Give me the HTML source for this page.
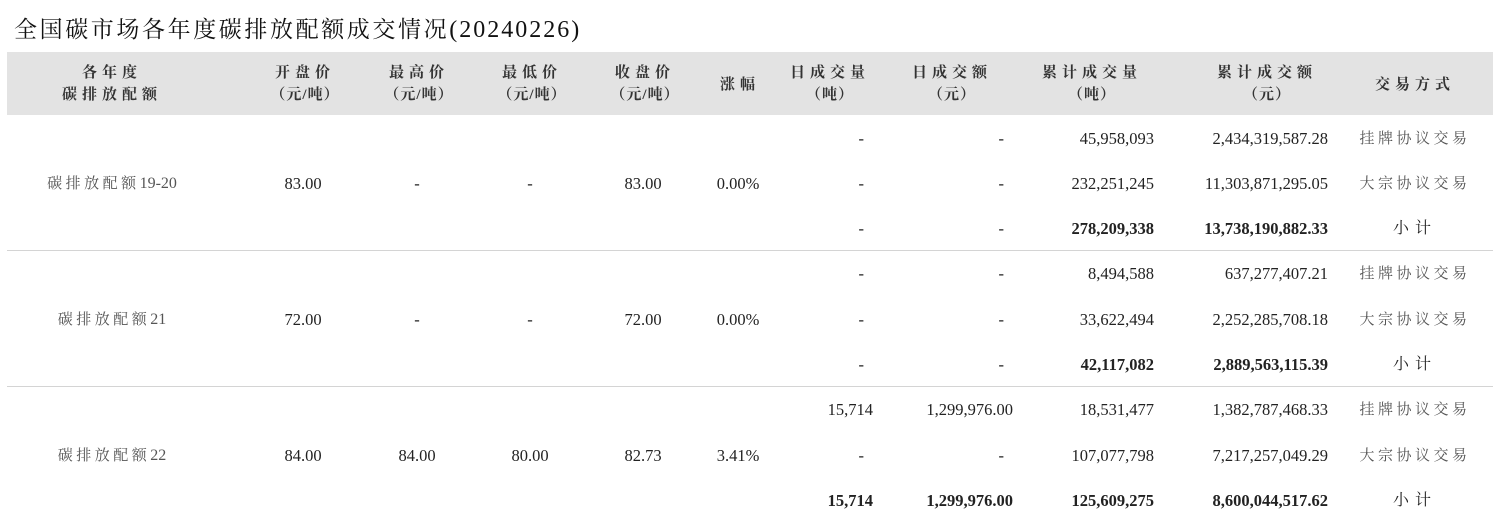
<!DOCTYPE html><html><head><meta charset="utf-8"><style>
body{margin:0;width:1500px;height:526px;background:#fff;position:relative;overflow:hidden;font-family:"Liberation Serif","Noto Serif CJK SC",serif;color:#222}
div{position:absolute;white-space:nowrap;font-size:16.5px;line-height:20px}
.t{left:14px;top:15px;font-size:23px;line-height:30px;color:#111;letter-spacing:2.6px}
.hd{left:7px;top:52px;width:1486px;height:63px;background:#e3e3e3}
.h{font-weight:bold;color:#333;text-align:center;width:200px;letter-spacing:5px;font-size:15px;line-height:22px}
.h span{letter-spacing:1px}
.c{text-align:center;width:200px}
.r{text-align:right}
.z{color:#555;letter-spacing:3.5px;font-size:15px}
.b{font-weight:bold}
.ln{left:7px;width:1486px;height:1px;background:#d4d4d4}
</style></head><body>
<div class="t">全国碳市场各年度碳排放配额成交情况<span style="letter-spacing:2px;font-size:24px">(20240226)</span></div>
<div class="hd"></div>
<div class="h" style="left:12px;top:62px">各年度<br>碳排放配额</div>
<div class="h" style="left:205px;top:62px">开盘价<br><span>（元/吨）</span></div>
<div class="h" style="left:319px;top:62px">最高价<br><span>（元/吨）</span></div>
<div class="h" style="left:432px;top:62px">最低价<br><span>（元/吨）</span></div>
<div class="h" style="left:545px;top:62px">收盘价<br><span>（元/吨）</span></div>
<div class="h" style="left:640px;top:74px">涨幅</div>
<div class="h" style="left:730px;top:62px">日成交量<br><span>（吨）</span></div>
<div class="h" style="left:852px;top:62px">日成交额<br><span>（元）</span></div>
<div class="h" style="left:992px;top:62px">累计成交量<br><span>（吨）</span></div>
<div class="h" style="left:1167px;top:62px">累计成交额<br><span>（元）</span></div>
<div class="h" style="left:1315px;top:74px">交易方式</div>
<div class="ln" style="top:250px"></div>
<div class="ln" style="top:386px"></div>

<div class="c z" style="left:12px;top:174px">碳排放配额<span style="letter-spacing:0;font-size:16px">19-20</span></div>
<div class="c" style="left:203px;top:174px">83.00</div>
<div class="c" style="left:317px;top:174px">-</div>
<div class="c" style="left:430px;top:174px">-</div>
<div class="c" style="left:543px;top:174px">83.00</div>
<div class="c" style="left:638px;top:174px">0.00%</div>
<div class="r" style="right:636px;top:129px">-</div><div class="r" style="right:496px;top:129px">-</div>
<div class="r" style="right:346px;top:129px">45,958,093</div><div class="r" style="right:172px;top:129px">2,434,319,587.28</div>
<div class="c z" style="left:1315px;top:129px">挂牌协议交易</div>
<div class="r" style="right:636px;top:174px">-</div><div class="r" style="right:496px;top:174px">-</div>
<div class="r" style="right:346px;top:174px">232,251,245</div><div class="r" style="right:172px;top:174px">11,303,871,295.05</div>
<div class="c z" style="left:1315px;top:174px">大宗协议交易</div>
<div class="r" style="right:636px;top:219px">-</div><div class="r" style="right:496px;top:219px">-</div>
<div class="r b" style="right:346px;top:219px">278,209,338</div><div class="r b" style="right:172px;top:219px">13,738,190,882.33</div>
<div class="c" style="left:1315px;top:219px;letter-spacing:6px;font-size:16px">小计</div>

<div class="c z" style="left:12px;top:310px">碳排放配额<span style="letter-spacing:0;font-size:16px">21</span></div>
<div class="c" style="left:203px;top:310px">72.00</div>
<div class="c" style="left:317px;top:310px">-</div>
<div class="c" style="left:430px;top:310px">-</div>
<div class="c" style="left:543px;top:310px">72.00</div>
<div class="c" style="left:638px;top:310px">0.00%</div>
<div class="r" style="right:636px;top:264px">-</div><div class="r" style="right:496px;top:264px">-</div>
<div class="r" style="right:346px;top:264px">8,494,588</div><div class="r" style="right:172px;top:264px">637,277,407.21</div>
<div class="c z" style="left:1315px;top:264px">挂牌协议交易</div>
<div class="r" style="right:636px;top:310px">-</div><div class="r" style="right:496px;top:310px">-</div>
<div class="r" style="right:346px;top:310px">33,622,494</div><div class="r" style="right:172px;top:310px">2,252,285,708.18</div>
<div class="c z" style="left:1315px;top:310px">大宗协议交易</div>
<div class="r" style="right:636px;top:355px">-</div><div class="r" style="right:496px;top:355px">-</div>
<div class="r b" style="right:346px;top:355px">42,117,082</div><div class="r b" style="right:172px;top:355px">2,889,563,115.39</div>
<div class="c" style="left:1315px;top:355px;letter-spacing:6px;font-size:16px">小计</div>

<div class="c z" style="left:12px;top:446px">碳排放配额<span style="letter-spacing:0;font-size:16px">22</span></div>
<div class="c" style="left:203px;top:446px">84.00</div>
<div class="c" style="left:317px;top:446px">84.00</div>
<div class="c" style="left:430px;top:446px">80.00</div>
<div class="c" style="left:543px;top:446px">82.73</div>
<div class="c" style="left:638px;top:446px">3.41%</div>
<div class="r" style="right:627px;top:400px">15,714</div><div class="r" style="right:487px;top:400px">1,299,976.00</div>
<div class="r" style="right:346px;top:400px">18,531,477</div><div class="r" style="right:172px;top:400px">1,382,787,468.33</div>
<div class="c z" style="left:1315px;top:400px">挂牌协议交易</div>
<div class="r" style="right:636px;top:446px">-</div><div class="r" style="right:496px;top:446px">-</div>
<div class="r" style="right:346px;top:446px">107,077,798</div><div class="r" style="right:172px;top:446px">7,217,257,049.29</div>
<div class="c z" style="left:1315px;top:446px">大宗协议交易</div>
<div class="r b" style="right:627px;top:491px">15,714</div><div class="r b" style="right:487px;top:491px">1,299,976.00</div>
<div class="r b" style="right:346px;top:491px">125,609,275</div><div class="r b" style="right:172px;top:491px">8,600,044,517.62</div>
<div class="c" style="left:1315px;top:491px;letter-spacing:6px;font-size:16px">小计</div>
</body></html>
